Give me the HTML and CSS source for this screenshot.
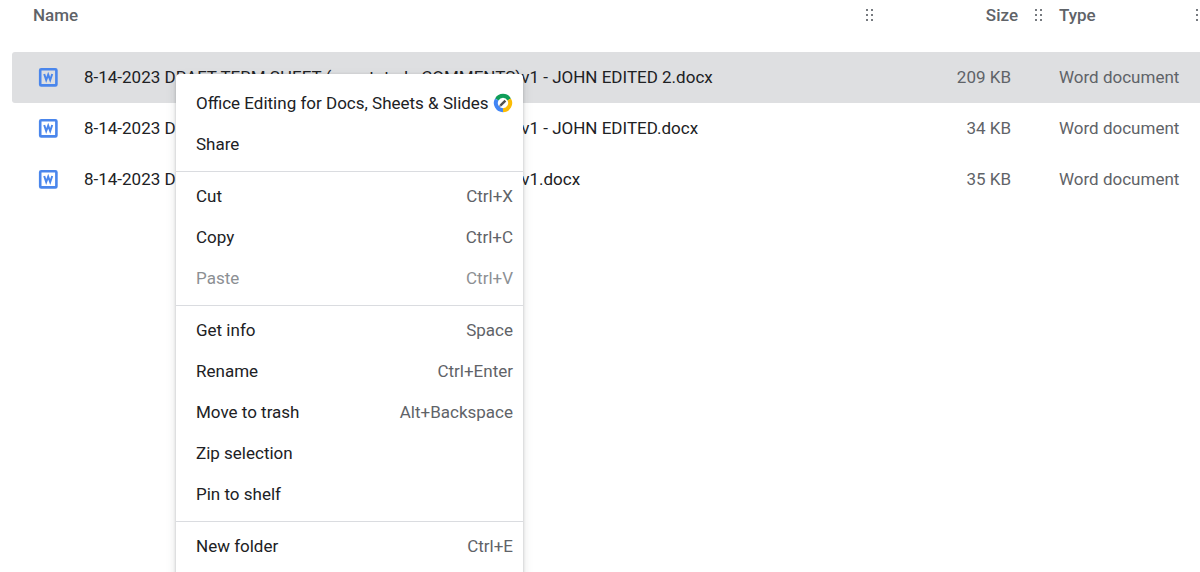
FILE: index.html
```html
<!DOCTYPE html>
<html lang="en">
<head>
<meta charset="utf-8">
<title>Files</title>
<link rel="stylesheet" href="styles.css">
</head>
<body>
<svg class="defs" aria-hidden="true">
  <symbol id="word" viewBox="0 0 20 20">
    <rect x="2.2" y="2.2" width="16.2" height="16.2" rx="1" fill="none" stroke="#4a86ec" stroke-width="2.6"/>
    <path d="M6.2 7L8.2 13L10.2 7.6L12.2 13L14.2 7" fill="none" stroke="#4a86ec" stroke-width="2"/>
  </symbol>
  <symbol id="grip" viewBox="0 0 10 14">
    <g fill="#777b80">
      <rect x="2" y="1" width="2" height="2"/><rect x="7" y="1" width="2" height="2"/>
      <rect x="2" y="6" width="2" height="2"/><rect x="7" y="6" width="2" height="2"/>
      <rect x="2" y="11" width="2" height="2"/><rect x="7" y="11" width="2" height="2"/>
    </g>
  </symbol>
</svg>
<main class="files">
  <table class="list">
    <thead>
      <tr>
        <th class="col-name"><div class="head"><span>Name</span><svg class="grip"><use href="#grip"/></svg></div></th>
        <th class="col-size"><div class="head head-end"><span>Size</span><svg class="grip"><use href="#grip"/></svg></div></th>
        <th class="col-type"><div class="head"><span>Type</span><svg class="grip"><use href="#grip"/></svg></div></th>
      </tr>
    </thead>
    <tbody>
      <tr class="selected">
        <td><div class="file"><svg class="icon"><use href="#word"/></svg><span>8-14-2023 DRAFT TERM SHEET (annotated - COMMENTS)v1 - JOHN EDITED 2.docx</span></div></td>
        <td class="size">209 KB</td>
        <td class="type">Word document</td>
      </tr>
      <tr>
        <td><div class="file"><svg class="icon"><use href="#word"/></svg><span>8-14-2023 DRAFT TERM SHEET (annotated - COMMENTS)v1 - JOHN EDITED.docx</span></div></td>
        <td class="size">34 KB</td>
        <td class="type">Word document</td>
      </tr>
      <tr>
        <td><div class="file"><svg class="icon"><use href="#word"/></svg><span>8-14-2023 DRAFT TERM SHEET (annotated - COMMENTS)v1.docx</span></div></td>
        <td class="size">35 KB</td>
        <td class="type">Word document</td>
      </tr>
    </tbody>
  </table>
</main>
<div class="menu" role="menu">
  <div class="group">
    <button class="item" role="menuitem"><span>Office Editing for Docs, Sheets &amp; Slides</span>
      <svg class="icon" viewBox="0 0 20 20">
        <g fill="none" stroke-width="4">
          <path d="M3.8 6.4A7.2 7.2 0 0 1 16.2 6.4" stroke="#0f9d58"/>
          <path d="M16.2 6.4A7.2 7.2 0 0 1 10 17.2" stroke="#fbbc05"/>
          <path d="M10 17.2A7.2 7.2 0 0 1 3.8 6.4" stroke="#4285f4"/>
        </g>
        <path d="M7.6 12.4L12.4 7.6" stroke="#505050" stroke-width="2.4"/>
        <path d="M6.2 13.8L6.8 11.6L8.4 13.2Z" fill="#505050"/>
      </svg>
    </button>
    <button class="item" role="menuitem"><span>Share</span></button>
  </div>
  <div class="group">
    <button class="item" role="menuitem"><span>Cut</span><span class="key">Ctrl+X</span></button>
    <button class="item" role="menuitem"><span>Copy</span><span class="key">Ctrl+C</span></button>
    <button class="item" role="menuitem" disabled><span>Paste</span><span class="key">Ctrl+V</span></button>
  </div>
  <div class="group">
    <button class="item" role="menuitem"><span>Get info</span><span class="key">Space</span></button>
    <button class="item" role="menuitem"><span>Rename</span><span class="key">Ctrl+Enter</span></button>
    <button class="item" role="menuitem"><span>Move to trash</span><span class="key">Alt+Backspace</span></button>
    <button class="item" role="menuitem"><span>Zip selection</span></button>
    <button class="item" role="menuitem"><span>Pin to shelf</span></button>
  </div>
  <div class="group">
    <button class="item" role="menuitem"><span>New folder</span><span class="key">Ctrl+E</span></button>
  </div>
</div>
</body>
</html>
```
FILE: styles.css
```css
* { box-sizing: border-box; }
html, body { height: 100%; }
body {
  margin: 0;
  overflow: hidden;
  background: #fff;
  color: #202124;
  font: 17px/20px Roboto, sans-serif;
}
.defs { position: absolute; width: 0; height: 0; }
.files { padding-left: 12px; overflow: hidden; }
.list {
  width: calc(100% + 4px);
  table-layout: fixed;
  border-collapse: separate;
  border-spacing: 0;
}
th, td { padding: 0; text-align: left; white-space: nowrap; }
th { height: 52px; vertical-align: top; color: #5f6368; font-weight: 500; }
td { height: 51px; padding-bottom: 1px; }
.col-size { width: 169px; }
.col-type { width: 161px; }
.head {
  display: flex;
  align-items: center;
  justify-content: space-between;
  padding: 5px 0 0 21px;
}
.head-end { justify-content: flex-end; gap: 15px; }
.col-type .head { padding-left: 16px; }
.grip { width: 10px; height: 14px; flex: none; }
.file { display: flex; align-items: center; gap: 26px; padding-left: 26px; }
.icon { width: 20px; height: 20px; flex: none; }
.size, .type { color: #5f6368; }
.size { padding-right: 32px; text-align: right; }
.type { padding-left: 16px; }
.selected td { background: #dedfe1; }
.selected td:first-child { border-radius: 3px 0 0 3px; }
.menu {
  position: absolute;
  top: 74px;
  left: 176px;
  width: 347px;
  padding: 5px 0;
  background: #fff;
  border-radius: 4px;
  box-shadow: 0 1px 3px rgba(60, 64, 67, .3), 0 4px 8px 2px rgba(60, 64, 67, .1);
}
.group { padding: 5px 0; }
.group + .group { border-top: 1px solid #dadce0; }
.item {
  display: flex;
  align-items: center;
  justify-content: space-between;
  width: 100%;
  height: 41px;
  padding: 0 10px 3px 20px;
  border: 0;
  background: none;
  color: #202124;
  font: inherit;
  text-align: left;
  white-space: nowrap;
}
.key { color: #5f6368; }
.item:disabled, .item:disabled .key { color: #8c8f93; }
```
